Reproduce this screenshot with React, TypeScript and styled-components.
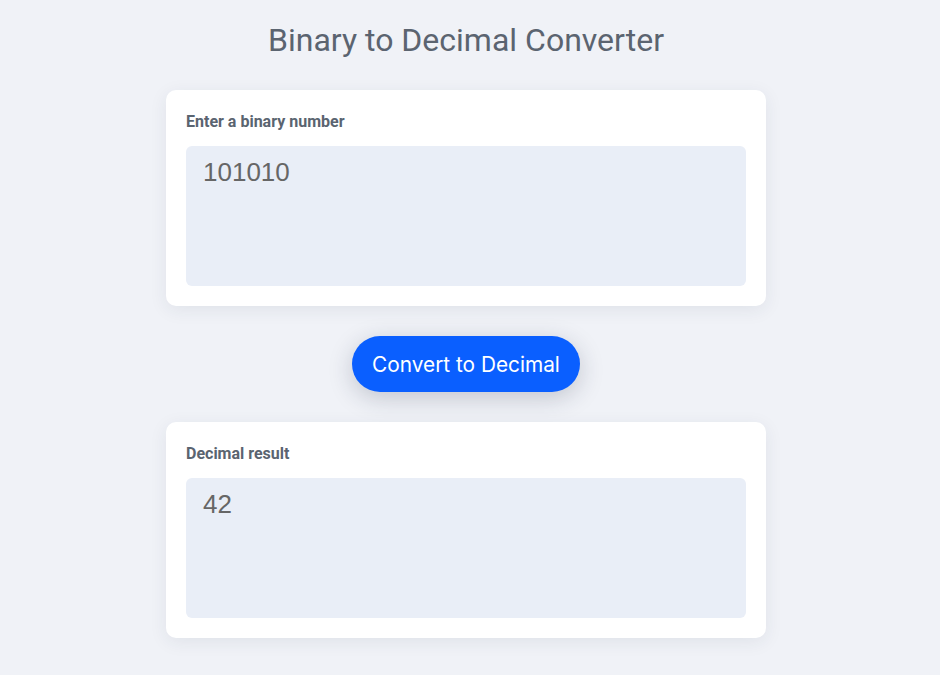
import React, { useState } from "react";
import styled, { createGlobalStyle } from "styled-components";

const Global = createGlobalStyle`
  html, body { margin: 0; padding: 0; background: #f0f2f7; }
  body { font-family: Roboto, "Liberation Sans", sans-serif; }
  * { box-sizing: border-box; }
`;

const Page = styled.div`
  min-height: 675px;
  display: flex;
  flex-direction: column;
  align-items: center;
  padding: 20px 8px 0 0;
`;

const Title = styled.h1`
  margin: 0 0 30px;
  font-family: Roboto, "Liberation Sans", sans-serif;
  font-weight: 400;
  font-size: 32px;
  line-height: 40px;
  color: #5b6470;
`;

const Card = styled.section`
  width: 600px;
  background: #ffffff;
  border-radius: 10px;
  padding: 20px;
  box-shadow: 0 4px 18px rgba(40, 50, 80, 0.08);
  display: flex;
  flex-direction: column;
`;

const Label = styled.label`
  font-family: Roboto, "Liberation Sans", sans-serif;
  font-weight: 700;
  font-size: 16px;
  line-height: 24px;
  color: #5a6470;
  margin: 0 0 12px;
`;

const Area = styled.textarea`
  width: 560px;
  height: 140px;
  resize: none;
  border: none;
  outline: none;
  border-radius: 6px;
  background: #e9eef7;
  padding: 10px 17px;
  font-family: "Liberation Sans", Arial, sans-serif;
  font-size: 26px;
  line-height: 32px;
  color: #666666;
`;

const Button = styled.button`
  margin: 30px 0;
  height: 56px;
  padding: 0 20px;
  border: none;
  border-radius: 28px;
  background: #0a5fff;
  color: #ffffff;
  font-family: Inter, "Noto Sans", sans-serif;
  font-size: 20.8px;
  cursor: pointer;
  box-shadow: 0 6px 24px rgba(30, 40, 70, 0.22);
`;

export default function App() {
  const [bin, setBin] = useState("101010");
  const [dec, setDec] = useState("42");
  const convert = () => {
    const v = bin.trim();
    if (/^[01]+$/.test(v)) setDec(String(parseInt(v, 2)));
    else setDec("");
  };
  return (
    <>
      <Global />
      <Page>
        <Title>Binary to Decimal Converter</Title>
        <Card>
          <Label htmlFor="bin">Enter a binary number</Label>
          <Area id="bin" value={bin} onChange={(e) => setBin(e.target.value)} />
        </Card>
        <Button onClick={convert}>Convert to Decimal</Button>
        <Card>
          <Label htmlFor="dec">Decimal result</Label>
          <Area id="dec" value={dec} readOnly />
        </Card>
      </Page>
    </>
  );
}
